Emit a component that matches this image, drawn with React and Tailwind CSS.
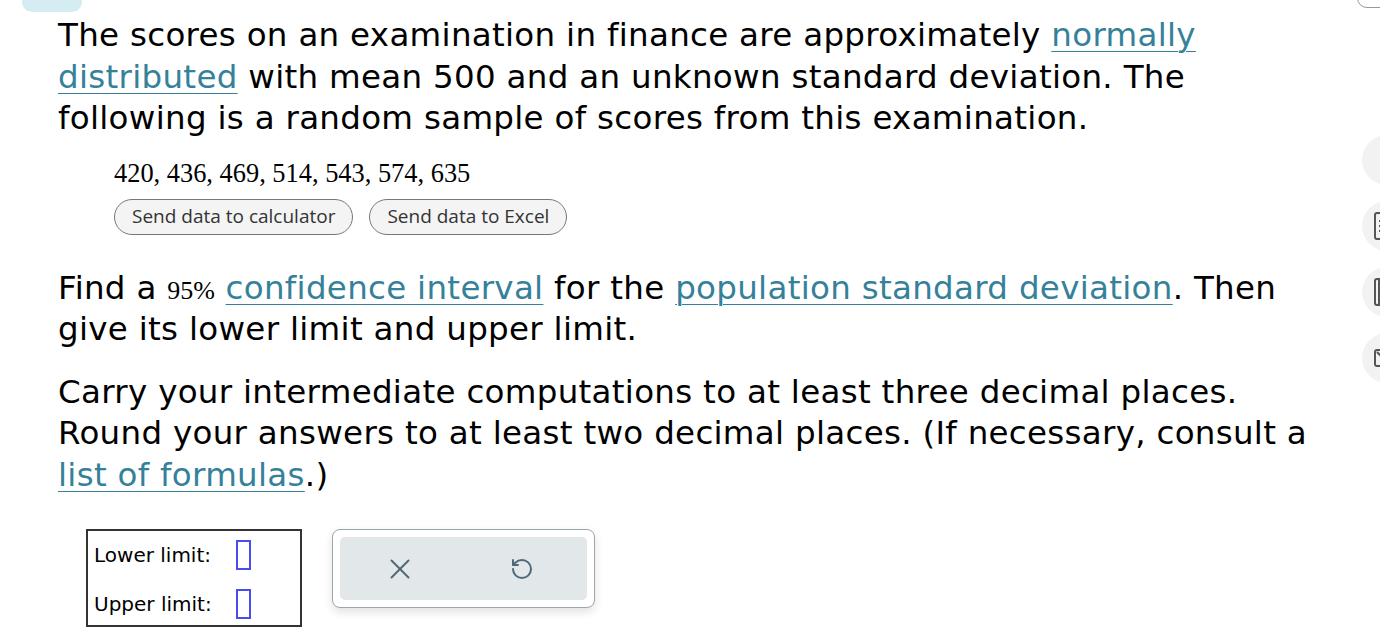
import { X, RotateCcw } from 'lucide-react';

const link = 'text-[#35819a] underline decoration-1 underline-offset-[5px]';
const body = 'text-[32.5px] leading-[41.5px] tracking-[0.3px]';

function SideButton({ children }) {
  return (
    <div className="w-[50px] h-[50px] rounded-full bg-[#f2f2f2] flex items-center pl-[12px] text-[#555]">
      {children}
    </div>
  );
}

export default function App() {
  return (
    <div className="relative w-[1380px] h-[638px] overflow-hidden bg-white font-['DejaVu_Sans',sans-serif] text-black">
      {/* clipped bits of the page chrome */}
      <div className="absolute left-[22px] top-[-20px] w-[60px] h-[32px] rounded-[10px] bg-[#d5ecf2]" />
      <div className="absolute left-[1357px] top-[-24px] w-[60px] h-[32px] rounded-[10px] border border-[#999]" />

      {/* floating tool rail on the right */}
      <div className="absolute left-[1362px] top-[135px] flex flex-col gap-[16px]">
        <SideButton />
        <SideButton>
          <svg width="14" height="28" viewBox="0 0 14 28" fill="none" stroke="#555" strokeWidth="2">
            <rect x="1" y="1" width="18" height="26" rx="2" />
            <path d="M5 9h2M5 14h2M5 19h2M10 9h2M10 14h2M10 19h2" />
          </svg>
        </SideButton>
        <SideButton>
          <svg width="14" height="28" viewBox="0 0 14 28" fill="none" stroke="#555" strokeWidth="2">
            <rect x="1" y="1" width="18" height="26" rx="2" />
            <path d="M5 2v24" />
          </svg>
        </SideButton>
        <SideButton>
          <svg width="14" height="18" viewBox="0 0 14 18" fill="none" stroke="#555" strokeWidth="2">
            <rect x="1" y="1" width="18" height="16" rx="2" />
            <path d="M3 3l6 6" />
          </svg>
        </SideButton>
      </div>

      <div className="pl-[58px] pt-[15px] w-[1330px]">
        <p className={body}>
          The scores on an examination in finance are approximately <span className={link}>normally distributed</span> with mean 500 and an unknown standard deviation. The following is a random sample of scores from this examination.
        </p>

        <div className="pl-[56px] pt-[18px]">
          <div className="font-['Liberation_Serif',serif] text-[26.4px] leading-[30px]">
            420, 436, 469, 514, 543, 574, 635
          </div>
          <div className="flex gap-[16px] mt-[11px] font-['Open_Sans',sans-serif] text-[19px] text-[#333]">
            <button className="h-[36px] px-[17px] rounded-full border border-[#777] bg-[#f4f4f4]">Send data to calculator</button>
            <button className="h-[36px] px-[17px] rounded-full border border-[#777] bg-[#f4f4f4]">Send data to Excel</button>
          </div>
        </div>

        <p className={`${body} mt-[33px]`}>
          Find a <span className="font-['Liberation_Serif',serif] text-[26px] leading-none tracking-normal">95%</span> <span className={link}>confidence interval</span> for the <span className={link}>population standard deviation</span>. Then give its lower limit and upper limit.
        </p>

        <p className={`${body} mt-[21px]`}>
          Carry your intermediate computations to at least three decimal places. Round your answers to at least two decimal places. (If necessary, consult a <span className={link}>list of formulas</span>.)
        </p>

        <div className="flex items-start gap-[30px] mt-[33px] ml-[28px]">
          <div className="w-[216px] h-[98px] border-2 border-[#333] flex flex-col justify-center gap-[19px] pl-[6px] pt-[2px] text-[20px]">
            <div className="flex items-center">
              <span className="w-[142px]">Lower limit:</span>
              <span className="w-[15px] h-[30px] border-2 border-[#4b4bf5]" />
            </div>
            <div className="flex items-center">
              <span className="w-[142px]">Upper limit:</span>
              <span className="w-[15px] h-[30px] border-2 border-[#4b4bf5]" />
            </div>
          </div>

          <div className="w-[263px] h-[79px] rounded-[8px] border border-[#9aa7ae] bg-white shadow-[0_4px_10px_rgba(0,0,0,0.12)] p-[7px]">
            <div className="h-full rounded-[5px] bg-[#e2e7ea] flex items-center pl-[43px] gap-[93px] text-[#4e6a78]">
              <X size={34} strokeWidth={1.4} />
              <RotateCcw size={24} strokeWidth={2} />
            </div>
          </div>
        </div>
      </div>
    </div>
  );
}
